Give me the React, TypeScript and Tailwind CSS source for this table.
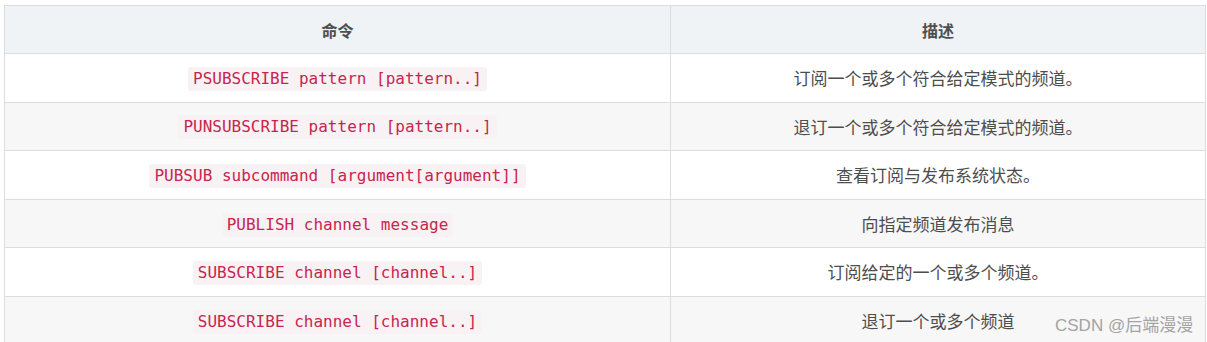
const ROWS = [
  { cmd: 'PSUBSCRIBE pattern [pattern..]', desc: '订阅一个或多个符合给定模式的频道。' },
  { cmd: 'PUNSUBSCRIBE pattern [pattern..]', desc: '退订一个或多个符合给定模式的频道。' },
  { cmd: 'PUBSUB subcommand [argument[argument]]', desc: '查看订阅与发布系统状态。' },
  { cmd: 'PUBLISH channel message', desc: '向指定频道发布消息' },
  { cmd: 'SUBSCRIBE channel [channel..]', desc: '订阅给定的一个或多个频道。' },
  { cmd: 'SUBSCRIBE channel [channel..]', desc: '退订一个或多个频道' },
]

const cjk = "font-['Microsoft_YaHei','Noto_Sans_CJK_SC',sans-serif]"

export default function App() {
  return (
    <div className="relative w-[1207px] h-[342px] overflow-hidden bg-white pt-[5px] pl-[4px]">
      <table className={`w-[1202px] border-collapse table-fixed ${cjk}`}>
        <colgroup>
          <col className="w-[666px]" />
          <col />
        </colgroup>
        <thead>
          <tr className="bg-[#eff3f5] h-[48px]">
            <th className="border border-[#dddddd] text-[16px] font-bold text-[#4f4f4f]">命令</th>
            <th className="border border-[#dddddd] text-[16px] font-bold text-[#4f4f4f]">描述</th>
          </tr>
        </thead>
        <tbody>
          {ROWS.map((row, i) => (
            <tr key={i} className={`h-[48.6px] ${i % 2 === 1 ? 'bg-[#f7f7f7]' : 'bg-white'}`}>
              <td className="border border-[#dddddd] p-0 text-center">
                <code className="inline-block rounded-[3px] bg-[#f9f2f4] px-[5px] leading-[24px] text-[16px] text-[#c7254e] font-['DejaVu_Sans_Mono',monospace]">
                  {row.cmd}
                </code>
              </td>
              <td className="border border-[#dddddd] p-0 text-center text-[17px] text-[#4d4d4d]">{row.desc}</td>
            </tr>
          ))}
        </tbody>
      </table>
      <div className="absolute left-[1055px] top-[317px] leading-[17px] text-[17px] text-[#a3a3a3] font-['Liberation_Sans','Noto_Sans_CJK_SC',sans-serif]">
        CSDN @后端漫漫
      </div>
    </div>
  )
}
